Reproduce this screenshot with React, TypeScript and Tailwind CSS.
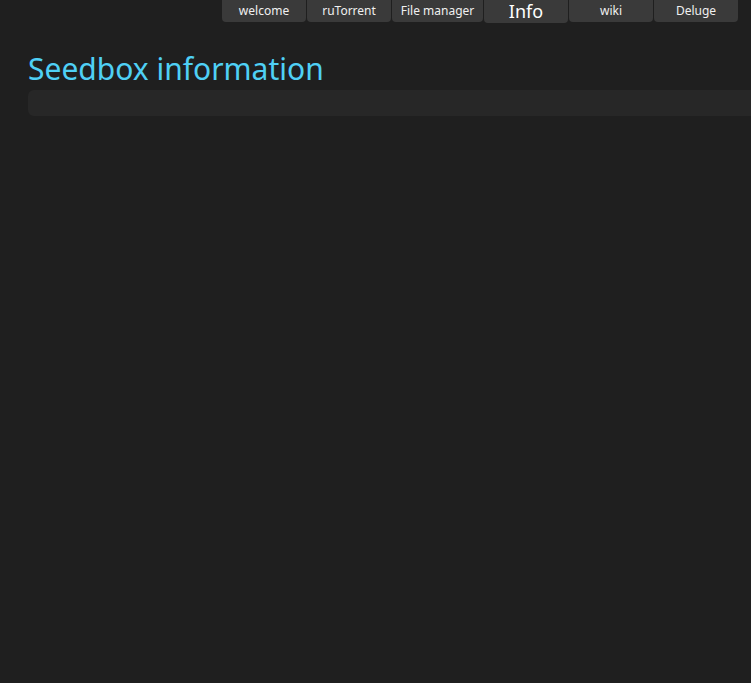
const tabs = [
    { label: "welcome", w: "w-[84px]" },
    { label: "ruTorrent", w: "w-[84px]" },
    { label: "File manager", w: "w-[91px]" },
    { label: "Info", w: "w-[84px]", active: true },
    { label: "wiki", w: "w-[84px]" },
    { label: "Deluge", w: "w-[84px]" },
];

export default function App() {
    return (
        <div className="min-h-[683px] w-[751px] overflow-hidden bg-[#1f1f1f] font-['Liberation_Sans',Arial,sans-serif]">
            <nav className="flex items-start gap-px pl-[222px]">
                {tabs.map((t) => (
                    <div
                        key={t.label}
                        className={
                            t.active
                                ? `${t.w} h-[23px] flex items-center justify-center rounded-b-[4px] bg-[#3a3a3a] text-[18px] text-white`
                                : `${t.w} h-[22px] flex items-center justify-center rounded-b-[4px] bg-[#3a3a3a] text-[12px] text-[#f0f0f0]`
                        }
                    >
                        {t.label}
                    </div>
                ))}
            </nav>
            <h1 className="mt-[28px] ml-[28px] text-[30px] leading-[36px] text-[#4fd0f5]">
                Seedbox information
            </h1>
            <div className="ml-[28px] mt-[3px] h-[26px] w-[760px] rounded-[6px] bg-[#272727]" />
        </div>
    );
}
